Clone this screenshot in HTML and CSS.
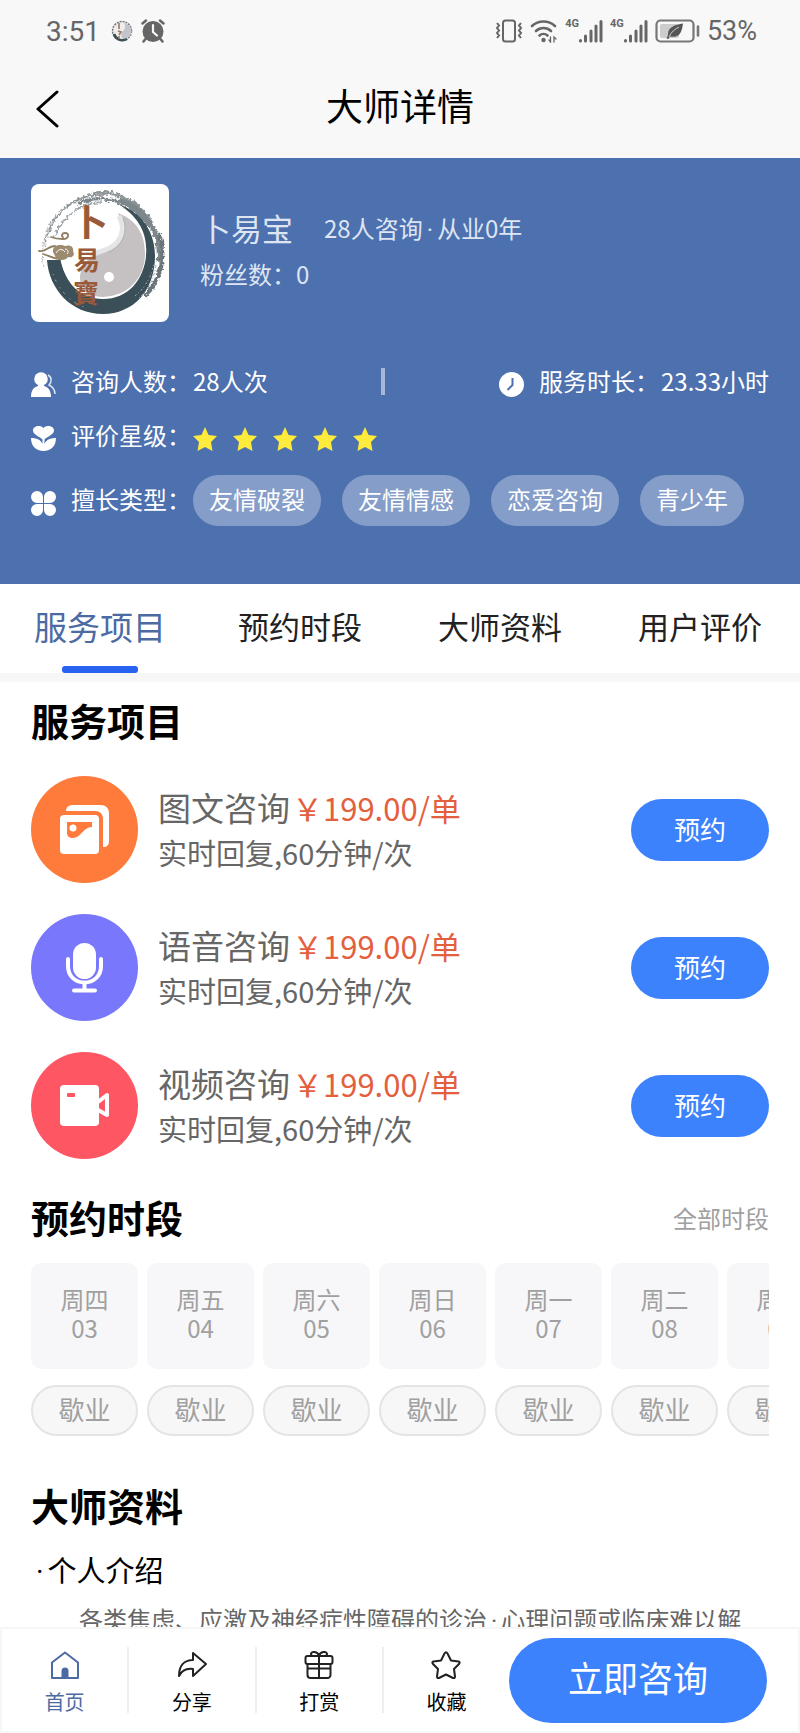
FILE: index.html
```html
<!DOCTYPE html>
<html lang="zh-CN">
<head>
  <meta charset="UTF-8">
  <title>大师详情</title>
  <meta name="viewport" content="width=device-width, initial-scale=1.0">
  <link rel="stylesheet" href="styles.css">
</head>
<body>

  <header class="top">
    <div class="status">
      <span class="time">3:51</span>
      <svg class="mini-logo" width="22" height="22" viewBox="0 0 22 22">
        <circle cx="11" cy="11" r="9.500" fill="#eee" stroke="#777" stroke-width="1.500" stroke-dasharray="2 1"/>
        <path d="M13 3a8 8 0 0 1-1 16c-3-3-2-6 0-8s3-5 1-8z" fill="#c2c6cc"/>
        <path d="M3 14a9 9 0 0 0 13 5" fill="none" stroke="#3b4f59" stroke-width="2.500"/>
        <path d="M8 3v6M7 11l3 1-2 3M8 16v3" fill="none" stroke="#a07860" stroke-width="1.600"/>
      </svg>
      <svg width="24" height="24" viewBox="0 0 24 24">
        <circle cx="12" cy="12.500" r="10.500" fill="#666"/>
        <path d="M1.500 4.500l3.500-3M22.500 4.500L19 1.500M4.500 20l-2 2.500M19.500 20l2 2.500" stroke="#666" stroke-width="2.500" stroke-linecap="round"/>
        <path d="M12 6v7l4 3.500" fill="none" stroke="#f8f8f8" stroke-width="2.200" stroke-linecap="round" stroke-linejoin="round"/>
      </svg>

      <div class="status-right">
        <svg width="28" height="24" viewBox="0 0 28 24" fill="none" stroke="#666" stroke-width="2">
          <rect x="8" y="1.500" width="12" height="21" rx="2.500"/>
          <path d="M2 4l2 2.500-2 2.500 2 2.500-2 2.500 2 2.500-2 2.500M26 4l-2 2.500 2 2.500-2 2.500 2 2.500-2 2.500 2 2.500"/>
        </svg>
        <svg width="28" height="24" viewBox="0 0 28 24" fill="none" stroke="#666" stroke-width="2.600" stroke-linecap="round">
          <path d="M2 7a17 17 0 0 1 23 0M6 12a11 11 0 0 1 15 0M9.500 16.500a6 6 0 0 1 8 0"/>
          <circle cx="13.500" cy="21" r="2.200" fill="#666" stroke="none"/>
          <path d="M20.500 18v5l-1.500-2M24 23v-5l2 2" stroke-width="1.300"/>
        </svg>
        <div class="signal">
          <span>4G</span>
          <svg width="24" height="24" viewBox="0 0 24 24" stroke="#666" stroke-width="3" stroke-linecap="round">
            <path d="M1.500 21.500v.5M6.500 17v5M12 12v10M17 7v15M22 2.500V22"/>
          </svg>
        </div>
        <div class="signal">
          <span>4G</span>
          <svg width="24" height="24" viewBox="0 0 24 24" stroke="#666" stroke-width="3" stroke-linecap="round">
            <path d="M1.500 21.500v.5M6.500 17v5M12 12v10M17 7v15M22 2.500V22"/>
          </svg>
        </div>
        <svg width="45" height="24" viewBox="0 0 45 24">
          <rect x="1.500" y="1.500" width="37" height="21" rx="4" fill="none" stroke="#777" stroke-width="2.200"/>
          <rect x="5" y="5" width="19" height="14" rx="2" fill="#ccc"/>
          <path d="M28 4.500c-8 1-15 4-15 10.500 0 1-.5 3-1.500 4.500l2 .5 1.500-2.500c10 2 12-5 13-13z" fill="#555"/>
          <path d="M14 18c2-5 6-8 10-10" stroke="#ccc" stroke-width="1" fill="none"/>
          <path d="M43 7.500v9" stroke="#777" stroke-width="2.600" stroke-linecap="round"/>
        </svg>
        <span class="battery">53%</span>
      </div>
    </div>

    <div class="navbar">
      <button type="button" class="back" aria-label="返回">
        <svg width="24" height="40" viewBox="0 0 24 40" fill="none" stroke="#000" stroke-width="3" stroke-linecap="round" stroke-linejoin="round">
          <path d="M21 3L2 20l19 17"/>
        </svg>
      </button>
      <h1>大师详情</h1>
    </div>
  </header>

  <section class="hero">
    <div class="profile">
      <svg class="avatar" viewBox="0 0 138 138">
        <filter id="brush">
          <feTurbulence type="fractalNoise" baseFrequency="0.35" numOctaves="2" seed="4"/>
          <feDisplacementMap in="SourceGraphic" scale="6" xChannelSelector="R" yChannelSelector="G"/>
        </filter>
        <!-- brush ring -->
        <g fill="none" filter="url(#brush)">
          <path d="M17 50a57 57 0 0 1 100-18" stroke="#9da3a6" stroke-width="1.500"/>
          <path d="M14 62a57 57 0 0 1 60-51" stroke="#8b9195" stroke-width="1.500"/>
          <path d="M13 84a60 60 0 0 1 20-60" stroke="#b5babd" stroke-width="1"/>
          <path d="M24 52a52 52 0 0 1 46-34" stroke="#a0a7aa" stroke-width="2"/>
          <path d="M46 20a54 54 0 0 1 70 22" stroke="#7d868a" stroke-width="3"/>
          <path d="M62 9a60 60 0 0 1 57 26" stroke="#8d9498" stroke-width="3"/>
          <path d="M88 16a58 58 0 0 1 40 62" stroke="#7d878b" stroke-width="5"/>
          <path d="M128 50a60 60 0 0 1-14 62" stroke="#6b7579" stroke-width="4"/>
        </g>
        <path d="M16 76c2 29 24 54 56 54 30 0 52-23 52-58 0-24-13-44-37-52 20 12 30 29 28 51-2 25-18 44-43 44-23 0-38-16-42-39z" fill="#3a4f58"/>
        <g fill="none" stroke="#a2adb0" stroke-width="1">
          <path d="M22 90c6 17 18 29 34 34" stroke-dasharray="1 5 2 7"/>
          <path d="M104 112c10-8 17-20 19-34" stroke-dasharray="2 2 1 3"/>
          <path d="M108 114c10-9 15-19 17-33" stroke-dasharray="1 2 3 2"/>
        </g>
        <!-- yin yang -->
        <circle cx="72" cy="69" r="43" fill="#fff"/>
        <path d="M87 29c19 7 27 22 27 40a42 42 0 0 1-42 44c-18 0-26-13-22-26 4-12 12-15 23-19 15-5 22-23 14-39z" fill="#c5c1c3"/>
        <path d="M88 32c8 15 1 29-14 34-8 3-11 3-15 6" fill="none" stroke="#e6e5e6" stroke-width="5"/>
        <path d="M92 34c6 16-2 29-15 34" fill="none" stroke="#aeb3b6" stroke-width="1"/>
        <circle cx="78" cy="93" r="5" fill="#fff"/>
        <!-- clouds -->
        <g fill="none" stroke="#8f7d63" stroke-width="1.800" stroke-linecap="round">
          <path d="M20 53c5 2 9 2 12 2 6 0 7-6 2-6-3 0-4 3-2 4"/>
          <path d="M8 67c8 1 8-5 16-5M12 70c7 2 11 5 17 5"/>
        </g>
        <path d="M22 68c-1-8 9-8 12-6 6-2 9 2 8 5 3 6-3 7-5 6-2 4-12 4-13-1z" fill="#9c8b70"/>
        <path d="M25 69c3-5 7-4 9-1M34 65c3 0 4 3 2 5" fill="none" stroke="#fff" stroke-width="1"/>
        <g class="avatar-text">
          <text x="41" y="52" font-size="36">卜</text>
          <text x="43" y="86" font-size="26">易</text>
          <text x="42" y="119" font-size="26">寶</text>
        </g>
      </svg>
      <div class="profile-info">
        <div class="name-row">
          <span class="name">卜易宝</span>
          <span>28人咨询<span class="dot">·</span>从业0年</span>
        </div>
        <div>粉丝数：0</div>
      </div>
    </div>

    <div class="stat-row">
      <svg class="icon" viewBox="0 0 25 25">
        <circle cx="10" cy="7" r="6.800" fill="#fff"/>
        <path d="M7 11h6v3c4 1 7 4 7 11H0c0-7 3-10 7-11z" fill="#fff"/>
        <path d="M17 3c4 2 4 7 1 10 4 2 6 4 6 9" fill="none" stroke="#dce4f2" stroke-width="1.500"/>
      </svg>
      <span class="label">咨询人数：</span>
      <span>28人次</span>
      <span class="divider"></span>
      <svg class="icon" viewBox="0 0 25 25">
        <circle cx="12.500" cy="12.500" r="12.500" fill="#fff"/>
        <path d="M13.500 6v7l-5 5" fill="none" stroke="#4d70ae" stroke-width="2"/>
      </svg>
      <span class="label">服务时长：</span>
      <span>23.33小时</span>
    </div>

    <div class="stat-row">
      <svg class="icon" viewBox="0 0 25 25" fill="#fff">
        <path d="M12.500 14C7 10 2 8 2 4.500 2 0 9-1.500 12.500 2 16-1.500 23 0 23 4.500c0 3.500-5 5.500-10.500 9.500z"/>
        <path d="M0 12c6 0 10 2 11.500 6v-5h2v5c1.500-4 5.500-6 11.500-6 0 8-5 13-12.500 13S0 20 0 12z"/>
      </svg>
      <span class="label">评价星级：</span>
      <div class="stars">
        <svg viewBox="0 0 24 24"><path d="M12 0l3.500 8 8.500 1-6 6 1.500 9-7.500-4-7.500 4L6 15 0 9l8.500-1z"/></svg>
        <svg viewBox="0 0 24 24"><path d="M12 0l3.500 8 8.500 1-6 6 1.500 9-7.500-4-7.500 4L6 15 0 9l8.500-1z"/></svg>
        <svg viewBox="0 0 24 24"><path d="M12 0l3.500 8 8.500 1-6 6 1.500 9-7.500-4-7.500 4L6 15 0 9l8.500-1z"/></svg>
        <svg viewBox="0 0 24 24"><path d="M12 0l3.500 8 8.500 1-6 6 1.500 9-7.500-4-7.500 4L6 15 0 9l8.500-1z"/></svg>
        <svg viewBox="0 0 24 24"><path d="M12 0l3.500 8 8.500 1-6 6 1.500 9-7.500-4-7.500 4L6 15 0 9l8.500-1z"/></svg>
      </div>
    </div>

    <div class="stat-row types">
      <svg class="icon" viewBox="0 0 25 25" fill="#fff">
        <path d="M12 12H6a6 6 0 1 1 6-6zM13 12V6a6 6 0 1 1 6 6zM12 13v6a6 6 0 1 1-6-6zM13 13h6a6 6 0 1 1-6 6z"/>
      </svg>
      <span class="label">擅长类型：</span>
      <div class="tags">
        <span class="tag">友情破裂</span>
        <span class="tag">友情情感</span>
        <span class="tag">恋爱咨询</span>
        <span class="tag">青少年</span>
      </div>
    </div>
  </section>

  <nav class="tabs">
    <a href="#services" class="active">服务项目</a>
    <a href="#schedule">预约时段</a>
    <a href="#about">大师资料</a>
    <a href="#reviews">用户评价</a>
  </nav>

  <main>
    <section id="services">
      <h2>服务项目</h2>
      <div class="services">
        <div class="service">
          <svg class="service-icon" viewBox="0 0 107 107">
            <circle cx="53.500" cy="53.500" r="53.500" fill="#ff7b3b"/>
            <path d="M35 35c0-4 3-6 7-6h27c6 0 9 3 9 9v27c0 4-2 6-6 6V43c0-5-3-8-8-8z" fill="#fff"/>
            <rect x="29" y="39" width="39" height="39" rx="4" fill="#fff"/>
            <path d="M36 46h25v5c-9 0-11 11-19 11-4 0-6-2-6-5z" fill="#ff7b3b"/>
            <circle cx="42" cy="52" r="3.500" fill="#fff"/>
          </svg>
          <div class="service-info">
            <h3>图文咨询<span class="price">￥199.00/单</span></h3>
            <p>实时回复,60分钟/次</p>
          </div>
          <button type="button" class="book">预约</button>
        </div>

        <div class="service">
          <svg class="service-icon" viewBox="0 0 107 107">
            <circle cx="53.500" cy="53.500" r="53.500" fill="#7978fc"/>
            <rect x="42" y="29" width="23" height="36" rx="11.500" fill="#fff"/>
            <path d="M37 45v7c0 22 33 22 33 0v-7M53.500 69v6M43 76.500h21" fill="none" stroke="#fff" stroke-width="4" stroke-linecap="round"/>
          </svg>
          <div class="service-info">
            <h3>语音咨询<span class="price">￥199.00/单</span></h3>
            <p>实时回复,60分钟/次</p>
          </div>
          <button type="button" class="book">预约</button>
        </div>

        <div class="service">
          <svg class="service-icon" viewBox="0 0 107 107">
            <circle cx="53.500" cy="53.500" r="53.500" fill="#ff5664"/>
            <rect x="29" y="33" width="39" height="41" rx="4" fill="#fff"/>
            <path d="M67 50l9-7v20l-9-5" fill="none" stroke="#fff" stroke-width="4" stroke-linejoin="round"/>
            <rect x="36" y="41" width="8" height="4" rx="1" fill="#ff5664"/>
          </svg>
          <div class="service-info">
            <h3>视频咨询<span class="price">￥199.00/单</span></h3>
            <p>实时回复,60分钟/次</p>
          </div>
          <button type="button" class="book">预约</button>
        </div>
      </div>
    </section>

    <section id="schedule">
      <div class="section-head">
        <h2>预约时段</h2>
        <a href="#schedule">全部时段</a>
      </div>
      <div class="days">
        <div class="day"><div class="date">周四<br>03</div><div class="rest">歇业</div></div>
        <div class="day"><div class="date">周五<br>04</div><div class="rest">歇业</div></div>
        <div class="day"><div class="date">周六<br>05</div><div class="rest">歇业</div></div>
        <div class="day"><div class="date">周日<br>06</div><div class="rest">歇业</div></div>
        <div class="day"><div class="date">周一<br>07</div><div class="rest">歇业</div></div>
        <div class="day"><div class="date">周二<br>08</div><div class="rest">歇业</div></div>
        <div class="day"><div class="date">周三<br>09</div><div class="rest">歇业</div></div>
      </div>
    </section>

    <section id="about">
      <h2>大师资料</h2>
      <h4><span class="dot">·</span>个人介绍</h4>
      <p class="intro">各类焦虑、应激及神经症性障碍的诊治<span class="dot">·</span>心理问题或临床难以解</p>
    </section>
  </main>

  <footer class="bottom-bar">
    <a href="#" class="item current">
      <svg width="30" height="28" viewBox="0 0 30 28">
        <path d="M2 11.500L15 1.500l13 10V27H2z" fill="none" stroke="#4c6ba3" stroke-width="2" stroke-linejoin="round"/>
        <path d="M11.500 27V20a3.500 3.500 0 0 1 7 0v7z" fill="#4c6ba3"/>
      </svg>
      首页
    </a>
    <a href="#" class="item">
      <svg width="30" height="28" viewBox="0 0 30 28" fill="none" stroke="#222" stroke-width="2" stroke-linejoin="round">
        <path d="M16 2l13 11-13 12v-7c-7-1-11 1-14 7 0-10 5-16 14-16z"/>
      </svg>
      分享
    </a>
    <a href="#" class="item">
      <svg width="30" height="28" viewBox="0 0 30 28" fill="none" stroke="#222" stroke-width="2" stroke-linejoin="round">
        <rect x="1.500" y="5" width="27" height="8" rx="2"/>
        <path d="M3.500 13v11a3 3 0 0 0 3 3h17a3 3 0 0 0 3-3V13M15 5v22M3.500 17.500h23M15 5c-1-5-8-5-8-2 0 1.500 1 2 2 2M15 5c1-5 8-5 8-2 0 1.500-1 2-2 2"/>
      </svg>
      打赏
    </a>
    <a href="#" class="item">
      <svg width="30" height="28" viewBox="0 0 30 28" fill="none" stroke="#222" stroke-width="2" stroke-linejoin="round">
        <path d="M13.500 2.500q1.500-2.500 3 0l3.500 7 7.500 1q2 .5.5 2.500l-5 5 1 7.500q0 2-2 1.500l-7-3.500-7 3.500q-2 .5-2-1.500l1-7.500-5-5q-1.500-2 .5-2.500l7.500-1z"/>
      </svg>
      收藏
    </a>
    <button type="button" class="consult">立即咨询</button>
  </footer>

</body>
</html>
```
FILE: styles.css
```css
* {
  box-sizing: border-box;
}

body {
  margin: 0;
  padding-bottom: 80px;
  background: #fff;
  color: #000;
  font-family: "Noto Sans CJK SC", sans-serif;
  font-size: 24px;
}

h1, h2, h3, h4, p {
  margin: 0;
}

a {
  color: inherit;
  text-decoration: none;
}

button {
  border: none;
  padding: 0;
  background: none;
  font-family: inherit;
  cursor: pointer;
}

svg {
  display: block;
  flex-shrink: 0;
}

.dot {
  padding: 0 4px;
  font-family: Roboto, sans-serif;
  line-height: 1;
}

/* status bar + title */
.top {
  background: #f8f8f8;
}

.status {
  display: flex;
  align-items: center;
  gap: 8px;
  height: 62px;
  padding: 0 43px 0 46px;
  color: #666;
  font-family: Roboto, "Noto Sans CJK SC", sans-serif;
  font-size: 28px;
}

.mini-logo {
  margin-left: 3px;
}

.status-right {
  display: flex;
  align-items: center;
  gap: 7px;
  margin-left: auto;
}

.signal {
  display: flex;
  font-size: 11px;
  font-weight: bold;
  line-height: 10px;
}

.battery {
  font-size: 27px;
}

.navbar {
  position: relative;
  height: 96px;
  padding-top: 16px;
  text-align: center;
}

.navbar h1 {
  font-size: 37px;
  font-weight: normal;
  line-height: 54px;
}

.back {
  position: absolute;
  left: 36px;
  top: 27px;
}

/* blue card */
.hero {
  padding: 26px 31px 58px;
  background: #4d70ae;
  color: #fff;
}

.profile {
  display: flex;
  gap: 31px;
  margin-bottom: 41px;
}

.avatar {
  width: 138px;
  height: 138px;
  border-radius: 8px;
  background: #fff;
}

.avatar-text {
  fill: #985a38;
  font-family: "Noto Sans CJK TC", sans-serif;
  font-weight: bold;
}

.profile-info {
  padding-top: 21px;
  color: #dde5f3;
  line-height: 46px;
}

.name-row {
  display: flex;
  gap: 31px;
}

.name {
  font-size: 31px;
}

.stat-row {
  display: flex;
  align-items: center;
  margin-bottom: 18px;
  line-height: 36px;
}

.icon {
  width: 25px;
  height: 25px;
  margin-top: 6px;
  margin-right: 15px;
}

.label {
  margin-right: 2px;
}

.divider {
  width: 4px;
  height: 27px;
  margin: 0 auto;
  background: #a6b8d7;
}

.stars {
  display: flex;
  gap: 16px;
  margin-top: 8px;
}

.stars svg {
  width: 24px;
  height: 24px;
  fill: #ffeb3b;
}

.types {
  margin-top: 22px;
  margin-bottom: 0;
}

.types .label {
  padding-bottom: 3px;
}

.tags {
  display: flex;
  gap: 21px;
}

.tag {
  height: 51px;
  padding: 0 16px;
  border-radius: 26px;
  background: #859dc9;
  line-height: 48px;
}

/* tabs */
.tabs {
  display: flex;
  height: 98px;
  border-bottom: 9px solid #f7f7f7;
  font-size: 31px;
  line-height: 84px;
  text-align: center;
}

.tabs a {
  position: relative;
  flex: 1;
  color: #222;
}

.tabs .active {
  color: #4c6ba3;
  font-size: 33px;
}

.tabs .active::after {
  content: "";
  position: absolute;
  left: 50%;
  bottom: 0;
  width: 76px;
  height: 7px;
  margin-left: -38px;
  border-radius: 3px;
  background: #2862f0;
}

main {
  padding: 13px 31px 0;
}

h2 {
  font-size: 38px;
  line-height: 50px;
}

/* services */
.services {
  display: flex;
  flex-direction: column;
  gap: 31px;
  margin: 31px 0 33px;
}

.service {
  display: flex;
  align-items: center;
}

.service-icon {
  width: 107px;
  height: 107px;
  margin-right: 20px;
}

.service-info {
  flex: 1;
  color: #666;
}

.service h3 {
  font-size: 33px;
  font-weight: normal;
  line-height: 44px;
}

.service p {
  font-size: 29px;
  line-height: 44px;
}

.price {
  margin-left: 2px;
  color: #e3603e;
  font-size: 31px;
}

.book {
  width: 138px;
  height: 62px;
  padding-bottom: 3px;
  border-radius: 31px;
  background: #3c82fc;
  color: #fff;
  font-size: 26px;
}

/* schedule */
.section-head {
  display: flex;
  align-items: center;
  justify-content: space-between;
  margin-bottom: 21px;
}

.section-head a {
  color: #a0a0a0;
}

.days {
  display: flex;
  gap: 9px;
  overflow: hidden;
  margin-bottom: 44px;
  color: #a0a0a0;
  text-align: center;
}

.day {
  flex: 0 0 107px;
}

.date {
  height: 106px;
  margin-bottom: 16px;
  padding-top: 21px;
  border-radius: 10px;
  background: #f7f7f9;
  line-height: 29px;
}

.rest {
  height: 51px;
  border: 2px solid #e4e4e6;
  border-radius: 26px;
  background: #f7f7f8;
  font-size: 26px;
  line-height: 43px;
}

/* about */
h4 {
  margin: 19px 0 12px;
  padding-left: 1px;
  font-size: 29px;
  font-weight: normal;
  line-height: 40px;
}

.intro {
  color: #666;
  line-height: 36px;
  text-indent: 2em;
}

/* bottom bar */
.bottom-bar {
  position: fixed;
  left: 0;
  right: 0;
  bottom: 0;
  display: flex;
  align-items: center;
  height: 106px;
  padding-right: 31px;
  border: 2px solid #f6f6f6;
  background: #fff;
}

.item {
  display: flex;
  flex: 1;
  flex-direction: column;
  align-items: center;
  gap: 12px;
  height: 66px;
  padding-top: 4px;
  border-right: 2px solid #eee;
  font-size: 20px;
  line-height: 22px;
}

.item:nth-child(4) {
  border-right: none;
}

.current {
  color: #4c6ba3;
}

.consult {
  width: 258px;
  height: 85px;
  padding-bottom: 8px;
  border-radius: 43px;
  background: #3c82fc;
  color: #fff;
  font-size: 35px;
}
```
